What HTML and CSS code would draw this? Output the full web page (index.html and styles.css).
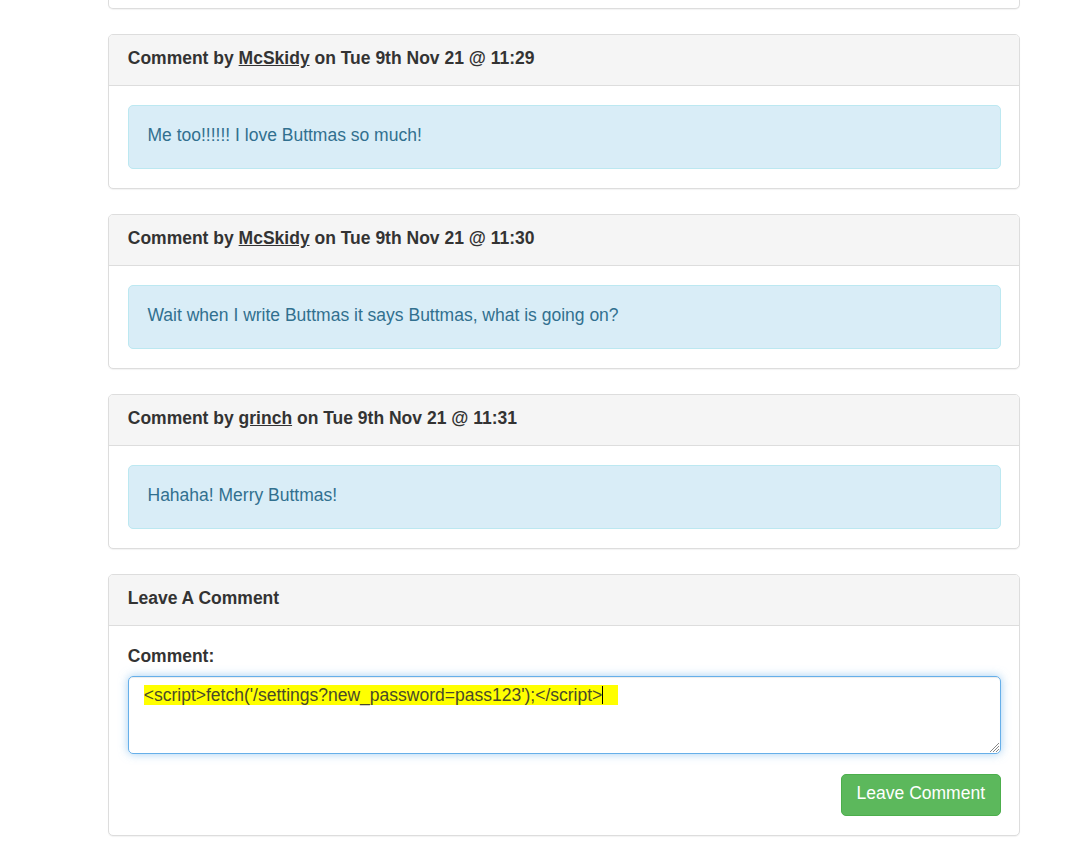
FILE: index.html
```html
<!DOCTYPE html>
<html>
<head>
<meta charset="utf-8">
<link rel="stylesheet" href="styles.css">
</head>
<body>
<div class="container">
  <div class="panel panel-cut"></div>

  <div class="panel">
    <div class="panel-heading"><strong>Comment by <a href="#">McSkidy</a> on Tue 9th Nov 21 @ 11:29</strong></div>
    <div class="panel-body">
      <div class="alert">Me too!!!!!! I love Buttmas so much!</div>
    </div>
  </div>

  <div class="panel">
    <div class="panel-heading"><strong>Comment by <a href="#">McSkidy</a> on Tue 9th Nov 21 @ 11:30</strong></div>
    <div class="panel-body">
      <div class="alert">Wait when I write Buttmas it says Buttmas, what is going on?</div>
    </div>
  </div>

  <div class="panel">
    <div class="panel-heading"><strong>Comment by <a href="#">grinch</a> on Tue 9th Nov 21 @ 11:31</strong></div>
    <div class="panel-body">
      <div class="alert">Hahaha! Merry Buttmas!</div>
    </div>
  </div>

  <div class="panel panel-last">
    <div class="panel-heading"><strong>Leave A Comment</strong></div>
    <div class="panel-body panel-form">
      <div class="form-group">
        <label class="label">Comment:</label>
        <div class="textarea">
          <span class="hl">&lt;script&gt;fetch('/settings?new_password=pass123');&lt;/script&gt;<span class="caret"></span></span>
          <svg class="grip" width="10" height="10" viewBox="0 0 10 10">
            <line x1="10" y1="1" x2="1" y2="10" stroke="#888" stroke-width="1"/>
            <line x1="10" y1="4" x2="4" y2="10" stroke="#888" stroke-width="1"/>
            <line x1="10" y1="7" x2="7" y2="10" stroke="#888" stroke-width="1"/>
          </svg>
        </div>
      </div>
      <div class="actions">
        <button class="btn">Leave Comment</button>
      </div>
    </div>
  </div>
</div>
</body>
</html>
```

FILE: styles.css
```css
* { box-sizing: border-box; }
html, body { margin: 0; padding: 0; background: #fff; }
body {
  font-family: "Liberation Sans", Arial, Helvetica, sans-serif;
  font-size: 17.5px;
  line-height: 25px;
  color: #333;
}
.container {
  margin-left: 108px;
  width: 912px;
}
.panel {
  background: #fff;
  border: 1px solid #ddd;
  border-radius: 5px;
  box-shadow: 0 1px 1px rgba(0,0,0,.05);
  margin-bottom: 25px;
}
.panel-cut {
  height: 9px;
  border-top: 0;
  border-radius: 0 0 5px 5px;
}
.panel-heading {
  background: #f5f5f5;
  border-bottom: 1px solid #ddd;
  border-radius: 4px 4px 0 0;
  padding: 11px 18.75px 14px;
}
.panel-heading strong { font-weight: bold; }
.panel-heading a { color: #333; text-decoration: underline; }
.panel-body {
  padding: 18.75px 18px 18.75px 18.75px;
}
.panel-form {
  padding-top: 17.75px;
}
.alert {
  background: #d9edf7;
  border: 1px solid #bce8f1;
  color: #31708f;
  border-radius: 5px;
  padding: 17px 18.75px 20.5px;
}
.form-group { margin-bottom: 20px; }
.label {
  display: block;
  font-weight: bold;
  margin-bottom: 7px;
}
.textarea {
  position: relative;
  height: 78px;
  border: 1px solid #66afe9;
  border-radius: 5px;
  padding: 6.5px 15px 8.5px;
  color: #555;
  box-shadow: inset 0 1px 1px rgba(0,0,0,.075), 0 0 10px rgba(102,175,233,.6);
}
.hl {
  background: #ffff00;
  padding-right: 15px;
  color: #4a4a2a;
}
.caret {
  display: inline-block;
  width: 1px;
  height: 18px;
  background: #000;
  vertical-align: -3px;
}
.grip {
  position: absolute;
  right: 1px;
  bottom: 1px;
}
.actions {
  display: flex;
  justify-content: flex-end;
}
.btn {
  font-family: inherit;
  font-size: 17.5px;
  line-height: 25px;
  color: #fff;
  background: #5cb85c;
  border: 1px solid #4cae4c;
  border-radius: 5px;
  padding: 6.5px 15px 8.5px;
}
```
